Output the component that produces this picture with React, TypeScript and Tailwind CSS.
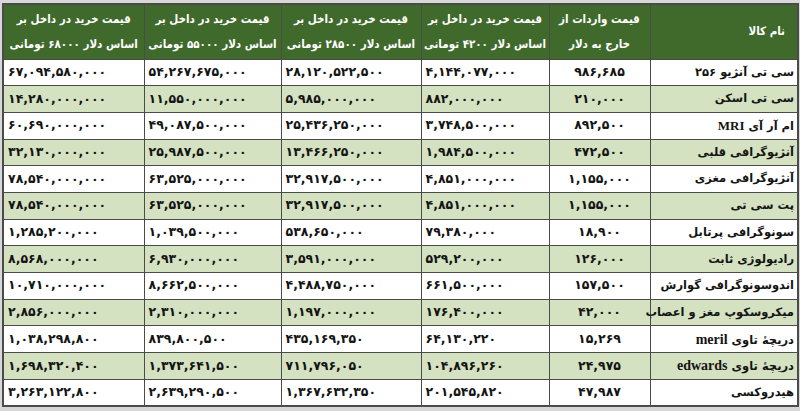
import React from "react";

// rows: name, import price (USD), then buy price at 4200 / 28500 / 55000 / 68000 toman
const rows: { name: React.ReactNode; light?: boolean; cells: string[] }[] = [
  { name: "سی تی آنژیو ۲۵۶", cells: ["۹۸۶,۶۸۵", "۴,۱۴۴,۰۷۷,۰۰۰", "۲۸,۱۲۰,۵۲۲,۵۰۰", "۵۴,۲۶۷,۶۷۵,۰۰۰", "۶۷,۰۹۴,۵۸۰,۰۰۰"] },
  { name: "سی تی اسکن", cells: ["۲۱۰,۰۰۰", "۸۸۲,۰۰۰,۰۰۰", "۵,۹۸۵,۰۰۰,۰۰۰", "۱۱,۵۵۰,۰۰۰,۰۰۰", "۱۴,۲۸۰,۰۰۰,۰۰۰"] },
  {
    name: (
      <>
        ام آر آی <span className="font-['Liberation_Serif',serif] text-[13px]">MRI</span>
      </>
    ),
    light: true,
    cells: ["۸۹۲,۵۰۰", "۳,۷۴۸,۵۰۰,۰۰۰", "۲۵,۴۳۶,۲۵۰,۰۰۰", "۴۹,۰۸۷,۵۰۰,۰۰۰", "۶۰,۶۹۰,۰۰۰,۰۰۰"],
  },
  { name: "آنژیوگرافی قلبی", cells: ["۴۷۲,۵۰۰", "۱,۹۸۴,۵۰۰,۰۰۰", "۱۳,۴۶۶,۲۵۰,۰۰۰", "۲۵,۹۸۷,۵۰۰,۰۰۰", "۳۲,۱۳۰,۰۰۰,۰۰۰"] },
  { name: "آنژیوگرافی مغزی", cells: ["۱,۱۵۵,۰۰۰", "۴,۸۵۱,۰۰۰,۰۰۰", "۳۲,۹۱۷,۵۰۰,۰۰۰", "۶۳,۵۲۵,۰۰۰,۰۰۰", "۷۸,۵۴۰,۰۰۰,۰۰۰"] },
  { name: "پت سی تی", cells: ["۱,۱۵۵,۰۰۰", "۴,۸۵۱,۰۰۰,۰۰۰", "۳۲,۹۱۷,۵۰۰,۰۰۰", "۶۳,۵۲۵,۰۰۰,۰۰۰", "۷۸,۵۴۰,۰۰۰,۰۰۰"] },
  { name: "سونوگرافی پرتابل", cells: ["۱۸,۹۰۰", "۷۹,۳۸۰,۰۰۰", "۵۳۸,۶۵۰,۰۰۰", "۱,۰۳۹,۵۰۰,۰۰۰", "۱,۲۸۵,۲۰۰,۰۰۰"] },
  { name: "رادیولوژی ثابت", cells: ["۱۲۶,۰۰۰", "۵۲۹,۲۰۰,۰۰۰", "۳,۵۹۱,۰۰۰,۰۰۰", "۶,۹۳۰,۰۰۰,۰۰۰", "۸,۵۶۸,۰۰۰,۰۰۰"] },
  { name: "اندوسونوگرافی گوارش", cells: ["۱۵۷,۵۰۰", "۶۶۱,۵۰۰,۰۰۰", "۴,۴۸۸,۷۵۰,۰۰۰", "۸,۶۶۲,۵۰۰,۰۰۰", "۱۰,۷۱۰,۰۰۰,۰۰۰"] },
  { name: "میکروسکوپ مغز و اعصاب", cells: ["۴۲,۰۰۰", "۱۷۶,۴۰۰,۰۰۰", "۱,۱۹۷,۰۰۰,۰۰۰", "۲,۳۱۰,۰۰۰,۰۰۰", "۲,۸۵۶,۰۰۰,۰۰۰"] },
  {
    name: (
      <>
        دریچهٔ تاوی <span className="font-['Liberation_Serif',serif] text-[14px]">meril</span>
      </>
    ),
    light: true,
    cells: ["۱۵,۲۶۹", "۶۴,۱۳۰,۲۲۰", "۴۳۵,۱۶۹,۳۵۰", "۸۳۹,۸۰۰,۵۰۰", "۱,۰۳۸,۲۹۸,۸۰۰"],
  },
  {
    name: (
      <>
        دریچهٔ تاوی <span className="font-['Liberation_Serif',serif] text-[14px]">edwards</span>
      </>
    ),
    cells: ["۲۴,۹۷۵", "۱۰۴,۸۹۶,۲۶۰", "۷۱۱,۷۹۶,۰۵۰", "۱,۳۷۳,۶۴۱,۵۰۰", "۱,۶۹۸,۳۲۰,۴۰۰"],
  },
  { name: "هیدروکسی", cells: ["۴۷,۹۸۷", "۲۰۱,۵۴۵,۸۲۰", "۱,۳۶۷,۶۳۲,۳۵۰", "۲,۶۳۹,۲۹۰,۵۰۰", "۳,۲۶۳,۱۲۲,۸۰۰"] },
];

const rates = ["۴۲۰۰", "۲۸۵۰۰", "۵۵۰۰۰", "۶۸۰۰۰"];

export default function App() {
  return (
    <div className="w-[800px] h-[411px] bg-[#d8d8d8] pt-[3px] pl-[2px] font-['DejaVu_Sans',sans-serif]">
      <table dir="rtl" className="table-fixed border-collapse border-2 border-[#4b4b4b] w-[795px]">
        <colgroup>
          <col className="w-[148px]" />
          <col className="w-[101px]" />
          <col className="w-[128px]" />
          <col className="w-[140px]" />
          <col className="w-[137px]" />
          <col className="w-[141px]" />
        </colgroup>
        <thead>
          <tr className="h-[55px] bg-[#3f6a2c] text-white text-[11.5px] font-bold font-['DejaVu_Sans_Condensed','DejaVu_Sans',sans-serif]">
            <th className="border border-[#4b4b4b] text-right pr-3 font-bold">نام کالا</th>
            <th className="border border-[#4b4b4b] text-center leading-[25px] font-bold">
              قیمت واردات از
              <br />
              خارج به دلار
            </th>
            {rates.map((r) => (
              <th key={r} className="border border-[#4b4b4b] text-center leading-[25px] font-bold whitespace-nowrap">
                قیمت خرید در داخل بر
                <br />
                اساس دلار {r} تومانی
              </th>
            ))}
          </tr>
        </thead>
        <tbody>
          {rows.map((row, i) => (
            <tr key={i} className={`h-[26.7px] ${i % 2 === 1 ? "bg-[#d4e2c2]" : "bg-white"} text-[#141414]`}>
              <td
                className={`border border-[#4b4b4b] text-right pr-[3px] text-[11.5px] whitespace-nowrap ${
                  row.light ? "font-semibold" : "font-bold"
                }`}
              >
                {row.name}
              </td>
              <td className="border border-[#4b4b4b] text-center text-[12.5px] font-bold" dir="ltr">
                {row.cells[0]}
              </td>
              {row.cells.slice(1).map((c, j) => (
                <td key={j} className="border border-[#4b4b4b] text-left pl-[4px] text-[12.5px] font-bold" dir="ltr">
                  {c}
                </td>
              ))}
            </tr>
          ))}
        </tbody>
      </table>
    </div>
  );
}
